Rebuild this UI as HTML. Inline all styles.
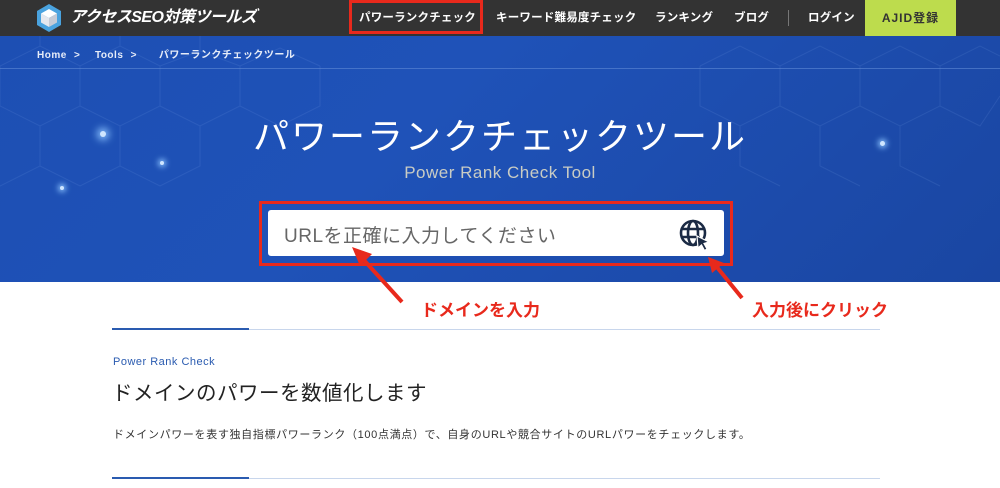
<!DOCTYPE html>
<html><head><meta charset="utf-8">
<style>
*{margin:0;padding:0;box-sizing:border-box}
body{width:1000px;height:488px;overflow:hidden;background:#fff;font-family:"Liberation Sans","Noto Sans CJK JP",sans-serif;position:relative}
.hdr{position:absolute;left:0;top:0;width:1000px;height:36px;background:#333}
.nav{position:absolute;top:0;height:36px;line-height:36px;color:#fff;font-size:11.5px;font-weight:bold;letter-spacing:0.2px;white-space:nowrap}
.hero{position:absolute;left:0;top:36px;width:1000px;height:246px;background:linear-gradient(135deg,#1d4fb3 0%,#1f52b8 40%,#1a46a2 100%);overflow:hidden}
.crumb{position:absolute;left:37px;top:46px;color:#e6ecf8;font-size:10px;font-weight:bold;letter-spacing:0.5px;word-spacing:4px}
.title{position:absolute;left:0;width:1000px;text-align:center;top:117px;line-height:40px;color:#fff;font-size:36px;letter-spacing:2px}
.sub{position:absolute;left:0;width:1000px;text-align:center;top:163px;line-height:20px;color:#c9ccc4;font-size:17px;letter-spacing:0.5px}
.box{position:absolute;left:268px;top:210px;width:456px;height:46px;background:#fff;border-radius:3px}
.ph{position:absolute;left:284px;top:221px;font-size:19px;color:#666;letter-spacing:0.5px}
.red{position:absolute;border:3px solid #e8291c}
.note{position:absolute;color:#e8291c;font-size:17px;font-weight:bold;white-space:nowrap}
.line{position:absolute;left:112px;width:768px;height:1px;background:#c8d6ec}
.line i{position:absolute;left:0;top:-1px;width:137px;height:2px;background:#2a5bb0}
</style></head><body>
<div class="hdr"></div>
<svg style="position:absolute;left:36px;top:3px" width="26" height="30" viewBox="0 0 26 30">
<polygon points="13,1 25,8 25,22 13,29 1,22 1,8" fill="#4aa3df"/>
<polygon points="13,6 21,10.5 13,15 5,10.5" fill="#fff"/>
<polygon points="5,10.5 13,15 13,24 5,19.5" fill="#e5e8ee"/>
<polygon points="21,10.5 13,15 13,24 21,19.5" fill="#c5cbd6"/>
</svg>
<div class="nav" style="left:70px;font-size:16px;font-style:italic;letter-spacing:-0.5px;font-weight:bold">アクセスSEO対策ツールズ</div>
<div class="nav" style="left:359px">パワーランクチェック</div>
<div class="red" style="left:349px;top:0px;width:134px;height:34px"></div>
<div class="nav" style="left:496px">キーワード難易度チェック</div>
<div class="nav" style="left:655px">ランキング</div>
<div class="nav" style="left:734px">ブログ</div>
<div style="position:absolute;left:788px;top:10px;width:1px;height:16px;background:#777"></div>
<div class="nav" style="left:808px">ログイン</div>
<div style="position:absolute;left:865px;top:0;width:91px;height:36px;background:#bddc4d;color:#333;font-size:12px;font-weight:bold;line-height:36px;text-align:center;letter-spacing:1px">AJID登録</div>
<div class="hero">
<svg width="1000" height="246" style="position:absolute;left:0;top:0;opacity:0.12">
<g fill="none" stroke="#8fb4f0" stroke-width="1">
<path d="M0,30 L40,10 L80,30 L120,10 L160,30 L200,15 L240,30 L280,12 L320,30 M40,10 L40,-10 M120,10 L120,-10 M200,15 L200,-5 M0,30 L0,70 L40,90 L80,70 L80,30 M160,30 L160,70 L120,90 L80,70 M240,30 L240,70 L200,90 L160,70 M320,30 L320,70 L280,90 L240,70 M40,90 L40,130 L0,150 M120,90 L120,130 L80,150 L40,130 M200,90 L200,130 L160,150 L120,130"/>
<path d="M700,30 L740,10 L780,30 L820,10 L860,30 L900,10 L940,30 L980,10 L1000,20 M700,30 L700,70 L740,90 L780,70 L780,30 M860,30 L860,70 L820,90 L780,70 M940,30 L940,70 L900,90 L860,70 M1000,60 L980,90 L940,70 M740,90 L740,130 L780,150 M820,90 L820,130 L860,150 M900,90 L900,130 L940,150"/>
</g>
</svg>
<div style="position:absolute;left:0;top:32px;width:1000px;height:1px;background:#5f8ad6;opacity:0.6"></div>
<div style="position:absolute;left:100px;top:95px;width:6px;height:6px;border-radius:50%;background:#cfe6ff;box-shadow:0 0 8px 3px #8cc4ff"></div>
<div style="position:absolute;left:160px;top:125px;width:4px;height:4px;border-radius:50%;background:#cfe6ff;box-shadow:0 0 6px 2px #8cc4ff"></div>
<div style="position:absolute;left:60px;top:150px;width:4px;height:4px;border-radius:50%;background:#cfe6ff;box-shadow:0 0 6px 2px #8cc4ff"></div>
<div style="position:absolute;left:880px;top:105px;width:5px;height:5px;border-radius:50%;background:#cfe6ff;box-shadow:0 0 6px 2px #8cc4ff"></div>
</div>
<div class="crumb">Home &gt;&nbsp; Tools &gt;&nbsp;&nbsp; パワーランクチェックツール</div>
<div class="title">パワーランクチェックツール</div>
<div class="sub">Power Rank Check Tool</div>
<div class="box"></div>
<div class="ph">URLを正確に入力してください</div>
<svg style="position:absolute;left:678px;top:218px" width="34" height="34" viewBox="0 0 34 34">
<g fill="none" stroke="#1b2a44" stroke-width="2.6">
<circle cx="15" cy="15" r="12"/>
<ellipse cx="15" cy="15" rx="5" ry="12"/>
<line x1="3" y1="11" x2="27" y2="11"/><line x1="3" y1="19" x2="22" y2="19"/>
</g>
<polygon points="19,18 31,24 26,25.5 29,31 26.5,32.5 23.5,27 20,30" fill="#1b2a44" stroke="#fff" stroke-width="1.2"/>
</svg>
<div class="red" style="left:259px;top:201px;width:474px;height:65px"></div>
<svg style="position:absolute;left:0;top:0" width="1000" height="488">
<g stroke="#e8291c" stroke-width="4" fill="#e8291c">
<line x1="402" y1="302" x2="362" y2="258"/>
<line x1="742" y1="298" x2="716" y2="266"/>
</g>
<polygon points="352,247 372,254 360,266" fill="#e8291c"/>
<polygon points="708,257 724,263 712,273" fill="#e8291c"/>
</svg>
<div class="note" style="left:421px;top:296px">ドメインを入力</div>
<div class="note" style="left:752px;top:296px">入力後にクリック</div>
<div class="line" style="top:329px"><i></i></div>
<div style="position:absolute;left:113px;top:356px;font-size:11px;color:#2a5bb0;letter-spacing:0.5px">Power Rank Check</div>
<div style="position:absolute;left:112px;top:376px;font-size:20.5px;color:#222;letter-spacing:0.5px">ドメインのパワーを数値化します</div>
<div style="position:absolute;left:113px;top:426px;font-size:11px;color:#333;letter-spacing:0.65px;white-space:nowrap">ドメインパワーを表す独自指標パワーランク（100点満点）で、自身のURLや競合サイトのURLパワーをチェックします。</div>
<div class="line" style="top:478px"><i></i></div>
</body></html>
